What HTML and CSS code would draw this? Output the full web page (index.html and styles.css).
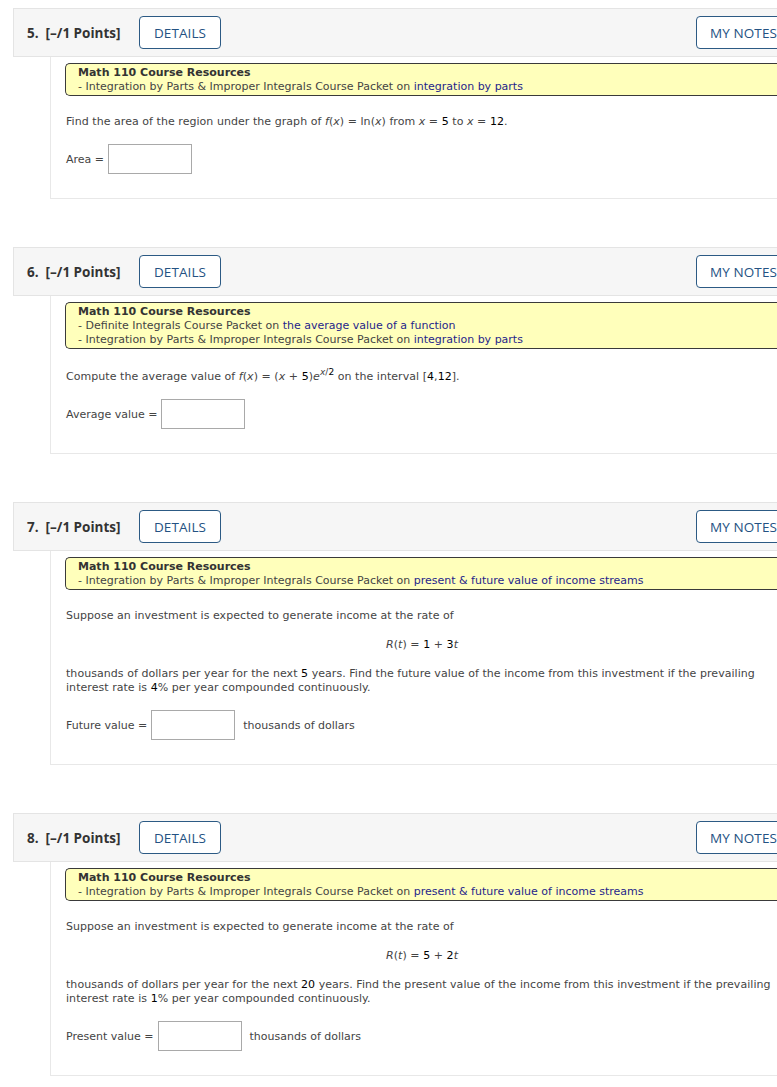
FILE: index.html
```html
<!DOCTYPE html>
<html>
<head>
<meta charset="utf-8">
<link rel="stylesheet" href="styles.css">
</head>
<body>
<div class="page">

  <section class="question">
    <div class="qhead">
      <span class="qtitle">5.&nbsp; [–/1 Points]</span>
      <span class="btn">DETAILS</span>
      <span class="spacer"></span>
      <span class="btn btn-notes">MY NOTES</span>
    </div>
    <div class="qbody">
      <div class="resources">
        <div class="res-title">Math 110 Course Resources</div>
        <div>- Integration by Parts &amp; Improper Integrals Course Packet on <a class="link">integration by parts</a></div>
      </div>
      <p>Find the area of the region under the graph of <i>f</i>(<i>x</i>) = ln(<i>x</i>) from <i>x</i> = <span class="num">5</span> to <i>x</i> = <span class="num">12</span>.</p>
      <div class="answer">
        <span>Area =</span>
        <span class="input"></span>
      </div>
    </div>
  </section>

  <section class="question">
    <div class="qhead">
      <span class="qtitle">6.&nbsp; [–/1 Points]</span>
      <span class="btn">DETAILS</span>
      <span class="spacer"></span>
      <span class="btn btn-notes">MY NOTES</span>
    </div>
    <div class="qbody">
      <div class="resources">
        <div class="res-title">Math 110 Course Resources</div>
        <div>- Definite Integrals Course Packet on <a class="link">the average value of a function</a></div>
        <div>- Integration by Parts &amp; Improper Integrals Course Packet on <a class="link">integration by parts</a></div>
      </div>
      <p class="has-sup">Compute the average value of <i>f</i>(<i>x</i>) = (<i>x</i> + <span class="num">5</span>)<i>e</i><sup><i>x</i>/<span class="num">2</span></sup> on the interval [<span class="num">4</span>,<span class="num">12</span>].</p>
      <div class="answer">
        <span>Average value =</span>
        <span class="input"></span>
      </div>
    </div>
  </section>

  <section class="question">
    <div class="qhead">
      <span class="qtitle">7.&nbsp; [–/1 Points]</span>
      <span class="btn">DETAILS</span>
      <span class="spacer"></span>
      <span class="btn btn-notes">MY NOTES</span>
    </div>
    <div class="qbody">
      <div class="resources">
        <div class="res-title">Math 110 Course Resources</div>
        <div>- Integration by Parts &amp; Improper Integrals Course Packet on <a class="link">present &amp; future value of income streams</a></div>
      </div>
      <p>Suppose an investment is expected to generate income at the rate of</p>
      <p class="eq"><i>R</i>(<i>t</i>) = <span class="num">1</span> + <span class="num">3</span><i>t</i></p>
      <p>thousands of dollars per year for the next <span class="num">5</span> years. Find the future value of the income from this investment if the prevailing interest rate is <span class="num">4</span>% per year compounded continuously.</p>
      <div class="answer">
        <span>Future value =</span>
        <span class="input"></span>
        <span>thousands of dollars</span>
      </div>
    </div>
  </section>

  <section class="question">
    <div class="qhead">
      <span class="qtitle">8.&nbsp; [–/1 Points]</span>
      <span class="btn">DETAILS</span>
      <span class="spacer"></span>
      <span class="btn btn-notes">MY NOTES</span>
    </div>
    <div class="qbody">
      <div class="resources">
        <div class="res-title">Math 110 Course Resources</div>
        <div>- Integration by Parts &amp; Improper Integrals Course Packet on <a class="link">present &amp; future value of income streams</a></div>
      </div>
      <p>Suppose an investment is expected to generate income at the rate of</p>
      <p class="eq"><i>R</i>(<i>t</i>) = <span class="num">5</span> + <span class="num">2</span><i>t</i></p>
      <p>thousands of dollars per year for the next <span class="num">20</span> years. Find the present value of the income from this investment if the prevailing interest rate is <span class="num">1</span>% per year compounded continuously.</p>
      <div class="answer">
        <span>Present value =</span>
        <span class="input"></span>
        <span>thousands of dollars</span>
      </div>
    </div>
  </section>

</div>
</body>
</html>
```
FILE: styles.css
```css
html, body {
  margin: 0;
  padding: 0;
  background: #ffffff;
  overflow: hidden;
}

body {
  font-family: "DejaVu Sans", Verdana, sans-serif;
  font-size: 11px;
  color: #444444;
}

.page {
  width: 780px;
  padding: 8px 0 0 13px;
}

.question {
  margin-bottom: 48px;
}

.qhead {
  display: flex;
  align-items: center;
  height: 33px;
  padding: 7px 0 7px 13px;
  background: #f6f6f6;
  border: 1px solid #e4e4e4;
  border-right: none;
}

.qtitle {
  font-family: "Open Sans", sans-serif;
  font-weight: 700;
  font-size: 13.5px;
  color: #333333;
  width: 112px;
}

.spacer {
  flex: 1;
}

.btn {
  box-sizing: border-box;
  height: 33px;
  width: 82px;
  display: flex;
  align-items: center;
  justify-content: center;
  border: 1.5px solid #2c5a84;
  border-radius: 4px;
  background: #ffffff;
  color: #245283;
  font-family: "Open Sans", sans-serif;
  font-weight: 500;
  font-size: 13.5px;
  letter-spacing: 0.1px;
  white-space: nowrap;
}

.btn-notes {
  justify-content: flex-start;
  padding-left: 13px;
  width: 97px;
}

.qbody {
  margin-left: 37px;
  border-left: 1px solid #e8e8e8;
  border-bottom: 1px solid #e8e8e8;
  padding: 6px 0 24px 15px;
}

.resources {
  margin-left: -1px;
  background: #ffffbb;
  border: 1px solid #3a3a3a;
  border-right: none;
  border-radius: 5px 0 0 5px;
  padding: 2px 0 1px 12px;
  line-height: 14px;
  margin-bottom: 19px;
}

.res-title {
  font-weight: bold;
  color: #333333;
}

.link {
  color: #1f1f8a;
}

p {
  margin: 0 0 15px 0;
  line-height: 14px;
  width: 712px;
  letter-spacing: 0.05px;
}

.has-sup {
  padding-top: 2px;
}

.eq {
  text-align: center;
}

.num {
  color: #000000;
}

sup {
  font-size: 9px;
  line-height: 0;
}

.answer {
  display: flex;
  align-items: center;
  gap: 4px;
  margin-top: 1px;
}

.answer span:first-child {
  padding-top: 1px;
}

.input {
  box-sizing: border-box;
  width: 84px;
  height: 30px;
  border: 1px solid #a9a9a9;
  background: #ffffff;
  margin-right: 4px;
}
```
